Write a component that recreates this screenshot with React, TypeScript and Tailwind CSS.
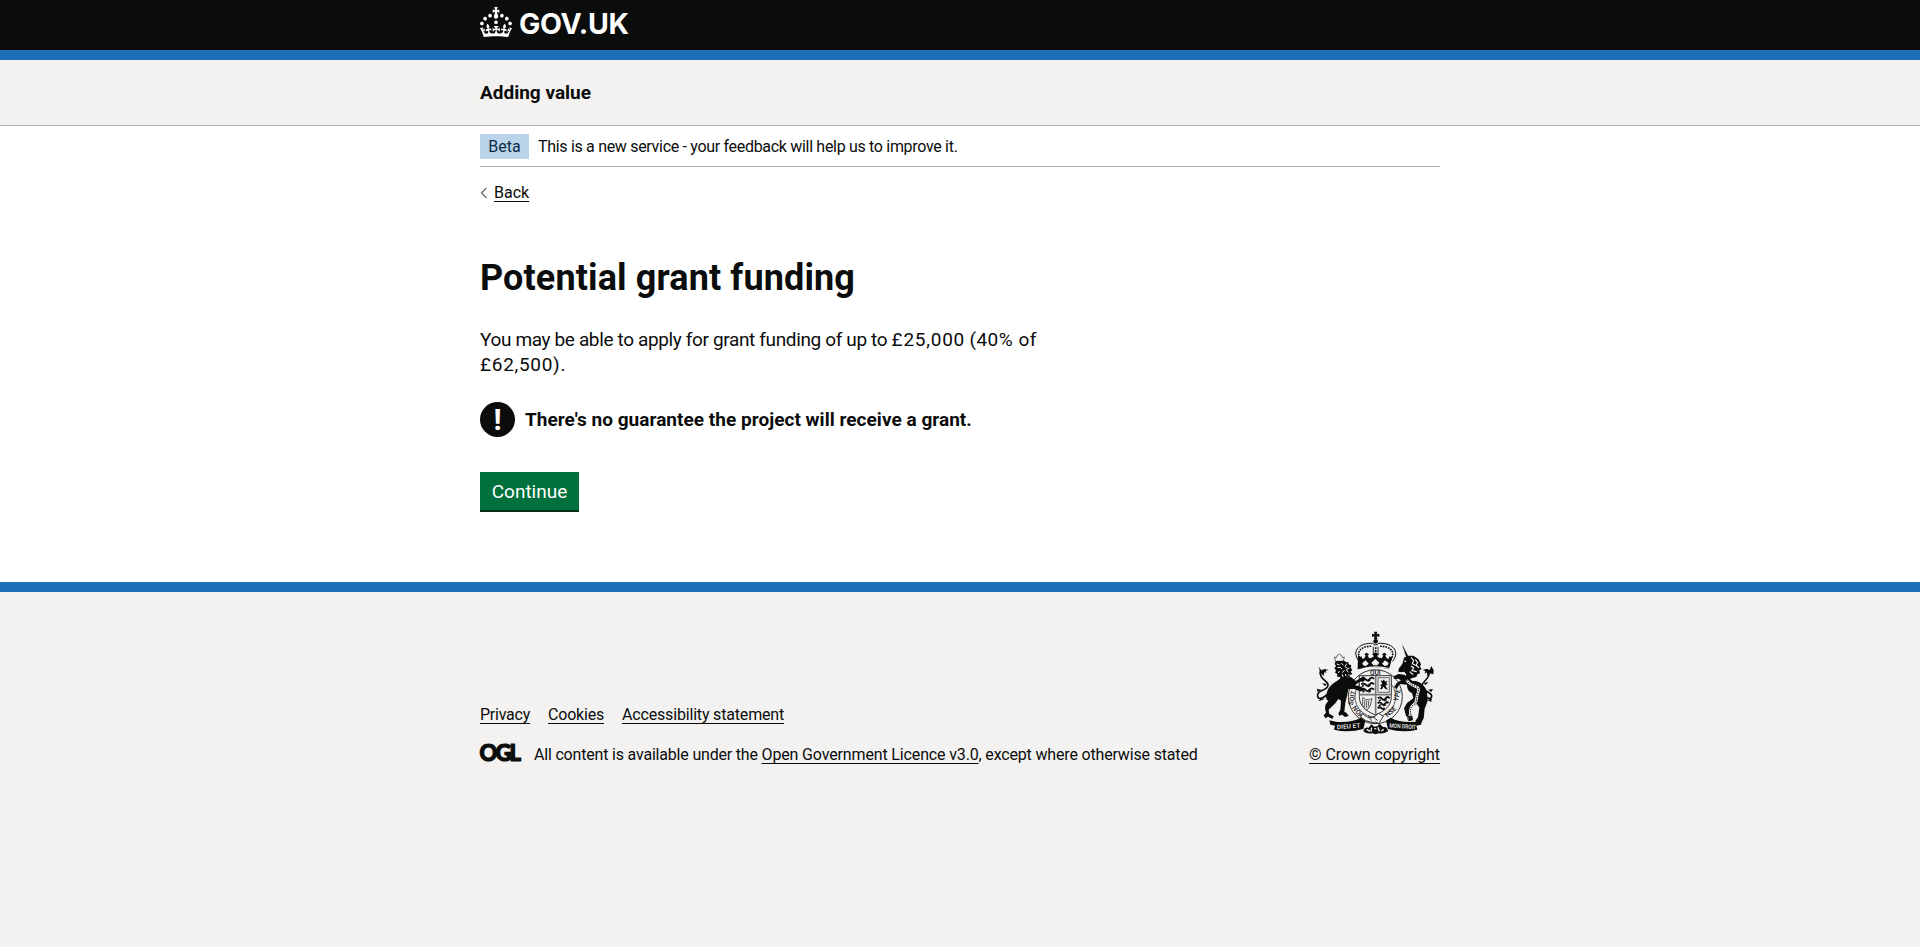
import type { ReactNode } from "react";

function CrownIcon() {
  return (
    <svg className="h-[30px] w-8 shrink-0 fill-white" viewBox="0 0 32 30" aria-hidden="true">
      <path d="M22.6 10.4c-1 .4-2-.1-2.4-1-.4-.9.1-2 1-2.4.9-.4 2 .1 2.4 1s-.1 2-1 2.4m-5.9 6.7c-.9.4-2-.1-2.4-1-.4-.9.1-2 1-2.4.9-.4 2 .1 2.4 1s-.1 2-1 2.4m10.8-3.7c-1 .4-2-.1-2.4-1-.4-.9.1-2 1-2.4.9-.4 2 .1 2.4 1s0 2-1 2.4m3.3 4.8c-1 .4-2-.1-2.4-1-.4-.9.1-2 1-2.4.9-.4 2 .1 2.4 1s-.1 2-1 2.4M17 4.7l2.3 1.2V2.5l-2.3.7-.2-.2.9-3h-3.4l.9 3-.2.2c-.1.1-2.3-.7-2.3-.7v3.4L15 4.7c.1.1.1.2.2.2l-1.3 4c-.1.2-.1.4-.1.6 0 1.1.8 2 1.9 2.2h.7c1-.2 1.9-1.1 1.9-2.1 0-.2 0-.4-.1-.6l-1.3-4c-.1-.2 0-.2.1-.3m-7.6 5.7c.9.4 2-.1 2.4-1 .4-.9-.1-2-1-2.4-.9-.4-2 .1-2.4 1s0 2 1 2.4m-5 3c.9.4 2-.1 2.4-1 .4-.9-.1-2-1-2.4-.9-.4-2 .1-2.4 1s.1 2 1 2.4m-3.2 4.8c.9.4 2-.1 2.4-1 .4-.9-.1-2-1-2.4-.9-.4-2 .1-2.4 1s0 2 1 2.4m14.8 11c4.4 0 8.6.3 12.3.8 1.1-4.5 2.4-7 3.7-8.8l-2.5-.9c.2 1.3.3 1.9 0 2.7-.4-.4-.8-1.1-1.1-2.3l-1.2 4c.7-.5 1.3-.8 2-.9-1.1 2.5-2.6 3.1-3.5 3-1.1-.2-1.7-1.2-1.5-2.1.3-1.2 1.5-1.5 2.1-.1 1.1-2.3-.8-3-2-2.3 1.9-1.9 2.1-3.5.6-5.6-2.1 1.6-2.1 3.2-1.2 5.5-1.2-1.4-3.2-.6-2.5 1.6.9-1.4 2.1-.5 1.9.8-.2 1.1-1.7 2.1-3.5 1.9-2.7-.2-2.9-2.1-2.9-3.6.7-.1 1.9.5 2.9 1.9l.4-4.3c-1.1 1.1-2.1 1.4-3.2 1.4.4-1.2 2.1-3 2.1-3h-5.4s1.7 1.9 2.1 3c-1.1 0-2.1-.2-3.2-1.4l.4 4.3c1-1.4 2.2-2 2.9-1.9-.1 1.5-.2 3.4-2.9 3.6-1.9.2-3.4-.8-3.5-1.9-.2-1.3 1-2.2 1.9-.8.7-2.3-1.2-3-2.5-1.6.9-2.2.9-3.9-1.2-5.5-1.5 2-1.3 3.7.6 5.6-1.2-.7-3.1 0-2 2.3.6-1.4 1.8-1.1 2.1.1.2.9-.3 1.9-1.5 2.1-.9.2-2.4-.5-3.5-3 .6 0 1.2.3 2 .9l-1.2-4c-.3 1.1-.7 1.9-1.1 2.3-.3-.8-.2-1.4 0-2.7l-2.9.9C1.3 23 2.6 25.5 3.7 30c3.7-.5 7.9-.8 12.3-.8" />
    </svg>
  );
}

function Crest() {
  return (
    <svg className="h-[105px] w-[120px]" viewBox="45 30 360 315" fill="#0b0c0c" aria-hidden="true">
      {/* crown */}
      <path d="M222 35h10l-2 8 8-2v10l-8-2 2 8h-10l2-8-8 2V41l8 2z" />
      <circle cx="227" cy="64" r="7" />
      <g fill="none" stroke="#0b0c0c">
        <path d="M177 124C150 88 185 68 218 70Q227 80 236 70C270 68 304 88 278 124" strokeWidth="3" />
        <path d="M184 120C162 92 190 77 216 79M271 120C292 92 264 77 238 79" strokeWidth="5" strokeDasharray="5 3" />
        <path d="M220 80v26M234 80v26" strokeWidth="2.5" />
        <path d="M227 82v24" strokeWidth="5" strokeDasharray="5 3" />
      </g>
      <path d="M174 104l5 8 6-3 2 8 6-2 4-8-4-4 7-5 7 5-4 4 5 8 8-2 6-5-5-5 9-6 10 6-5 5 6 5 8 2 5-8-4-4 7-5 7 5-4 4 4 8 6 2 2-8 6 3 5-8-12 44q-45-12-94 0z" />
      <g fill="#f3f2f1">
        <path d="M187 129l10-8 9 10-8 7-9-2zM214 128l12-11 12 11-6 8h-12zM246 131l9-10 11 8-3 7-9 2z" />
        <path d="M188 144q39-10 80 0v3q-40-9-80 0z" />
      </g>

      {/* garter */}
      <circle cx="226" cy="230" r="82" fill="#f3f2f1" />
      <g fill="none" stroke="#0b0c0c">
        <circle cx="226" cy="230" r="81" strokeWidth="2.5" />
        <circle cx="226" cy="230" r="61" strokeWidth="2" />
      </g>
      <g fontFamily="Roboto, sans-serif" fontWeight="500" fontSize="20" textAnchor="middle">
        <text x="226" y="166">QUI</text>
        <text transform="rotate(-78 163 235)" x="163" y="235">SOIT</text>
        <text transform="rotate(-128 176 275)" x="176" y="280">HON</text>
        <text transform="rotate(-75 290 225)" x="290" y="233">YPE</text>
        <text transform="rotate(-42 272 275)" x="272" y="282">NSE</text>
      </g>
      <path d="M178 167h96v62c0 30-20 44-48 56c-28-12-48-26-48-56z" fill="#f3f2f1" stroke="#0b0c0c" strokeWidth="2.5" />
      <path d="M227 167v118M178 224h96" stroke="#77787a" strokeWidth="5" />
      <g fill="none" stroke="#0b0c0c" strokeWidth="5.5">
        <path d="M184 177q7-6 13 1t12-1t13 0M184 193q7-6 13 1t12-1t13 0M184 209q7-6 13 1t12-1t13 0" />
        <path d="M185 184l7-4M203 184l8-4M185 200l7-4M203 200l8-4M188 217l6-5M206 217l7-5" strokeWidth="4" />
        <path d="M234 235q7-6 12 1t11-1t12 0M233 250q7-6 12 1t11-1t9 0M233 265q6-6 12 0t8-2" />
        <path d="M236 243l7-4M252 243l8-4M236 258l7-4M250 258l8-4" strokeWidth="4" />
      </g>
      <rect x="234" y="173" width="34" height="44" fill="none" stroke="#77787a" strokeWidth="3.5" />
      <path d="M241 181l7 2 4-5 3 7 8-3-4 8 4 5-7 1 4 7 4 7-8-4-6-6-4 8-6-1 5-8-6-3 7-3-1-6z" />
      <path d="M188 232l10 7q12 2 18-4M188 232v24q4 14 14 14q12-12 14-35M194 240v22M200 242v22M206 242v18" fill="none" stroke="#55575a" strokeWidth="3" />
      <path d="M187 281q14 15 32 12l17-13 14 9-14 22-20-4q-20-2-34-16z" fill="#f3f2f1" stroke="#0b0c0c" strokeWidth="2.5" />
      <path d="M205 288l10 14M219 290l14 12M226 305l12 8" stroke="#0b0c0c" strokeWidth="2.5" />

      {/* lion */}
      <path d="M107 124l-4-13 6 2 2-6 7-5 7 5 2 6 6-2-3 13z" fill="#f3f2f1" stroke="#4c4d4f" strokeWidth="2.5" />
      <path d="M107 124l25-2 8 5 5-1 1 7 8 3-2 7 5 7-5 5 5 8-8 2 1 8-8-1-3 8-8-5-8 4-3-8-9-1 1-8-7-4 3-7-5-6 5-7-4-6z" />
      <g stroke="#f3f2f1" strokeWidth="3" fill="none">
        <path d="M110 132l9 3M112 143l9-1 5 5M124 129l6 7M140 131l-5 9 7 5M148 144l-9 5 6 8M133 151l-6 7M136 162l3 7M118 153l-3 6M127 163l2 8M145 164l4 2" />
      </g>
      <path d="M122 174l-8 7c-16 9-29 20-33 36c-5 13-4 20 4 27c-10 8-12 19-7 34l-7 8 5 9 8-5 13 7 4-8-13-8-2-12 20-19 9-13 8 5-2 28-6 10 3 7 8-3 9 7 11-3-6-9-7-4 3-27 6-24 3-17 17 0 18 7 11-1 1-7-9-6-18-4 14-11 13-1 5-7-7-8-8 5-15 9-14-12z" />
      <path d="M84 222C62 241 51 238 53 223C56 209 82 212 84 196C86 183 60 180 61 158" fill="none" stroke="#0b0c0c" strokeWidth="5" />
      <path d="M56 140l8 11 9-4 13 3-9 2 2 7-6-3-2 12-8-8-5 2 1-11zM53 216l-3-10 14 3zM76 199l-10-9 13 2zM62 235l-6 9 18-7z" />

      {/* unicorn */}
      <path d="M308 77l16 31-5 3z" stroke="#0b0c0c" strokeWidth="1" />
      <path d="M312 113l12-6 16 0 15 10 8 15-3 8 5 7-7 4 2 9-8 3-3 8-12 3-13 5-10-3 5-12-6-9-10 2-8-2 1-9 11-14z" />
      <g stroke="#f3f2f1" strokeWidth="3.5" fill="none">
        <path d="M333 112l8 9-4 10 9 5M346 118l7 10-5 8 9 7M333 138l8 6-5 8 14 3M329 155l10 9" />
        <path d="M313 122l5 3" />
      </g>
      <path d="M313 164l-18-2-14 7 1 8 13-1 8 5-13 8-8 13 8 5 9-15 22 2c0 12 4 20 15 25l4 16-19 14-9 16 6 23 8 5-1 11 14-3-2-13-10-16 5-9 19-11 7 11-4 29-8 11 6 7 13-3 6-12 3-29 9-23c-2-16 1-30-9-42c-9-11-18-19-36-18z" />
      <path d="M370 224c15 15 24 14 25 4c1-13-28-13-29-29c-1-17 20-15 22-43" fill="none" stroke="#0b0c0c" strokeWidth="5" />
      <path d="M394 138l-5 12-9-4-12 4 8 3-2 8 7-4 1 11 7-8 11 3 1-12zM394 216l5-9-15 2zM376 195l10-8-15 1zM381 239l15-3-3 10z" />
      <path d="M320 180C333 205 363 192 354 218C346 236 354 246 341 254C325 265 335 277 329 290" fill="none" stroke="#f3f2f1" strokeWidth="8" />
      <path d="M320 180C333 205 363 192 354 218C346 236 354 246 341 254C325 265 335 277 329 290" fill="none" stroke="#0b0c0c" strokeWidth="3" strokeDasharray="4 3" />
      <circle cx="329" cy="295" r="6" fill="none" stroke="#0b0c0c" strokeWidth="2.5" />

      {/* motto ribbon */}
      <path d="M88 301l19 4q42 5 76-12l13 9-6 25q-44 12-88 2l3-12-14-3z" />
      <path d="M366 301l-19 4q-42 5-76-12l-13 9 6 25q44 12 88 2l-3-12 14-3z" />
      <g fill="#f3f2f1" fontFamily="Roboto, sans-serif" fontWeight="500" textAnchor="middle">
        <text transform="rotate(-4 146 322)" x="146" y="325" fontSize="18" textLength="70" lengthAdjust="spacingAndGlyphs">DIEU ET</text>
        <text transform="rotate(4 308 322)" x="308" y="325" fontSize="18" textLength="80" lengthAdjust="spacingAndGlyphs">MON DROIT</text>
      </g>
      <path d="M190 334q3-15 16-11l8-10 9 7 8-1 9-7 9 9q14-2 15 13q-14 9-28 6l-9 3-9-3q-18 3-28-6z" />
      <path d="M200 328l10 6M215 323l-2 12M234 322l4 12M251 328l-7 6M223 326h6" stroke="#f3f2f1" strokeWidth="4" />
    </svg>
  );
}

function Container({ className = "", children }: { className?: string; children: ReactNode }) {
  return <div className={`mx-auto w-[960px] ${className}`}>{children}</div>;
}

function FooterLink({ className = "", children }: { className?: string; children: ReactNode }) {
  return (
    <a href="#" className={`underline decoration-1 underline-offset-[3px] ${className}`}>
      {children}
    </a>
  );
}

export default function App() {
  return (
    <div className="flex min-h-screen flex-col bg-white font-[Roboto,sans-serif] text-base leading-5 text-[#0b0c0c]">
      <header>
        <div className="h-[60px] border-b-[10px] border-[#1d70b8] bg-[#0b0c0c]">
          <Container className="flex pt-[7px]">
            <a href="#" className="flex items-start gap-[7px] text-white">
              <CrownIcon />
              <span className="font-[Inter,sans-serif] text-[28.5px] leading-[33px] font-bold tracking-[-0.3px]">GOV.UK</span>
            </a>
          </Container>
        </div>
        <div className="h-[66px] border-b border-[#b1b4b6] bg-[#f3f2f1] pt-5">
          <Container>
            <a href="#" className="text-[19px] leading-[25px] font-bold">Adding value</a>
          </Container>
        </div>
      </header>

      <Container>
        <div className="flex items-center gap-[9px] border-b border-[#b1b4b6] pt-2 pb-[7px]">
          <strong className="h-[25px] w-[49px] bg-[#bbd4ea] pt-[3px] text-center font-normal text-[#0c2d4a]">Beta</strong>
          <span className="tracking-[-0.31px]">This is a new service - your feedback will help us to improve it.</span>
        </div>
        <a href="#" className="mt-4 flex w-fit items-center gap-[7px]">
          <svg className="h-3 w-[7px]" viewBox="0 0 7 12" fill="none" stroke="#505a5f" strokeWidth="1.1">
            <path d="M6.5 .8L1.5 6l5 5.2" />
          </svg>
          <span className="underline decoration-1 underline-offset-[3px]">Back</span>
        </a>

        <main className="w-[630px] pt-[55px]">
          <h1 className="text-[36px] leading-10 font-bold tracking-[0.13px]">Potential grant funding</h1>
          <p className="mt-[29px] w-[580px] text-[19px] leading-[25px] tracking-[-0.36px]">
            You may be able to apply for grant funding of up to{" "}
            <span className="tracking-[0.75px]">£25,000</span> <span className="tracking-[0.5px]">(40% of</span>{" "}
            <span className="tracking-[0.7px]">£62,500).</span>
          </p>
          <div className="mt-[25px] flex items-center gap-2.5">
            <span className="flex size-[35px] items-center justify-center rounded-full bg-[#0b0c0c] text-[30px] leading-[30px] font-bold text-white">!</span>
            <strong className="text-[19px] leading-[25px] font-bold tracking-[0.03px]">
              There's no guarantee the project will receive a grant.
            </strong>
          </div>
          <button className="mt-[35px] flex h-[38px] w-[99px] items-center justify-center bg-[#00703c] text-[19px] leading-[19px] text-white shadow-[0_2px_0_#002d18]">
            Continue
          </button>
        </main>
      </Container>

      <footer className="mt-[72px] flex-1 border-t-[10px] border-[#1d70b8] bg-[#f3f2f1] pt-[38px]">
        <Container className="flex items-end justify-between">
          <div>
            <nav className="flex gap-[18px]">
              <FooterLink className="tracking-[-0.24px]">Privacy</FooterLink>
              <FooterLink className="tracking-[-0.2px]">Cookies</FooterLink>
              <FooterLink className="tracking-[-0.174px]">Accessibility statement</FooterLink>
            </nav>
            <div className="mt-5 flex gap-3">
              <svg className="-my-[6px] h-[30px] w-[42px] overflow-visible" viewBox="0 0 42 30" aria-hidden="true">
                <text x="-0.5" y="22" fontFamily="Lato, sans-serif" fontWeight="900" fontSize="22" textLength="41.5" lengthAdjust="spacing" fill="#0b0c0c" stroke="#0b0c0c" strokeWidth="1.2">OGL</text>
              </svg>
              <p className="tracking-[-0.17px]">
                <span className="tracking-[-0.19px]">All content is available under the </span>
                <FooterLink className="tracking-[-0.146px]">Open Government Licence v3.0</FooterLink>
                , except where otherwise stated
              </p>
            </div>
          </div>
          <div className="flex flex-col items-end">
            <div className="pr-[5px]">
              <Crest />
            </div>
            <FooterLink className="mt-2.5 tracking-[-0.09px]">© Crown copyright</FooterLink>
          </div>
        </Container>
      </footer>
    </div>
  );
}
